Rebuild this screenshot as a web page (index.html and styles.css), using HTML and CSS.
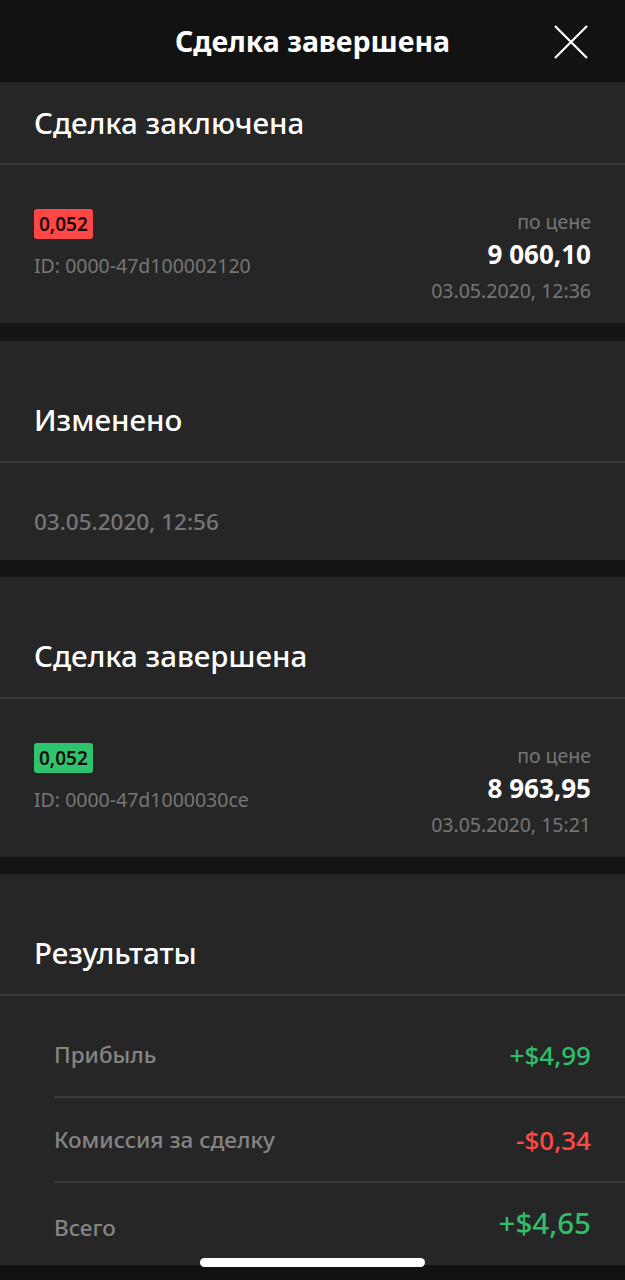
FILE: index.html
```html
<!DOCTYPE html>
<html lang="ru">
<head>
<meta charset="UTF-8">
<meta name="viewport" content="width=device-width, initial-scale=1.0">
<title>Сделка завершена</title>
<link rel="stylesheet" href="styles.css">
</head>
<body>

<div class="topbar">
  <div class="topbar-title">Сделка завершена</div>
  <button class="close-btn" aria-label="Закрыть">
    <svg width="34" height="34" viewBox="0 0 34 34">
      <path d="M1 1 L33 33 M33 1 L1 33" stroke="#fff" stroke-width="2.2" fill="none"/>
    </svg>
  </button>
</div>

<div class="section first-section">
  <div class="section-head first">Сделка заключена</div>
  <div class="deal">
    <div class="deal-left">
      <span class="badge red">0,052</span>
      <div class="muted">ID: 0000-47d100002120</div>
    </div>
    <div class="deal-right">
      <div class="muted">по цене</div>
      <div class="price">9 060,10</div>
      <div class="muted">03.05.2020, 12:36</div>
    </div>
  </div>
</div>

<div class="section">
  <div class="section-head">Изменено</div>
  <div class="changed">03.05.2020, 12:56</div>
</div>

<div class="section">
  <div class="section-head">Сделка завершена</div>
  <div class="deal">
    <div class="deal-left">
      <span class="badge green">0,052</span>
      <div class="muted">ID: 0000-47d1000030ce</div>
    </div>
    <div class="deal-right">
      <div class="muted">по цене</div>
      <div class="price">8 963,95</div>
      <div class="muted">03.05.2020, 15:21</div>
    </div>
  </div>
</div>

<div class="section results">
  <div class="section-head">Результаты</div>
  <div class="result-row first-row">
    <span class="label">Прибыль</span>
    <span class="value plus">+$4,99</span>
  </div>
  <div class="result-row">
    <span class="label">Комиссия за сделку</span>
    <span class="value minus">-$0,34</span>
  </div>
  <div class="result-row last-row">
    <span class="label">Всего</span>
    <span class="value plus total">+$4,65</span>
  </div>
</div>

<div class="bottom">
  <div class="home-bar"></div>
</div>

</body>
</html>
```

FILE: styles.css
```css
body {
  margin: 0;
  background: #141414;
  font-family: "Noto Sans", "Open Sans", sans-serif;
  color: #fff;
  width: 625px;
  height: 1280px;
  overflow: hidden;
}
.topbar {
  height: 82px;
  background: #121212;
  display: flex;
  align-items: center;
  justify-content: center;
  position: relative;
}
.topbar-title {
  font-size: 28.5px;
  font-weight: 700;
}
.close-btn {
  position: absolute;
  right: 37px;
  top: 25px;
  padding: 0;
  border: 0;
  background: none;
  line-height: 0;
}
.section {
  background: #262626;
  margin-bottom: 17px;
}
.section.first-section {
  margin-bottom: 18px;
}
.section-head {
  height: 122px;
  box-sizing: border-box;
  padding: 0 34px 22px;
  display: flex;
  align-items: flex-end;
  font-size: 29.5px;
  font-weight: 500;
  line-height: 38px;
  border-bottom: 2px solid #3a3a3a;
}
.section-head.first {
  height: 83px;
  padding-bottom: 21px;
}
.deal {
  height: 158px;
  box-sizing: border-box;
  padding: 44px 34px 0;
  display: flex;
  justify-content: space-between;
  align-items: flex-start;
}
.deal-left {
  display: flex;
  flex-direction: column;
  align-items: flex-start;
  gap: 14px;
}
.deal-right {
  display: flex;
  flex-direction: column;
  align-items: flex-end;
}
.muted {
  color: #767676;
  font-size: 19.5px;
  line-height: 26px;
}
.badge {
  font-size: 19px;
  font-weight: 600;
  color: #1a0a0a;
  padding: 0 5px;
  border-radius: 3px;
  line-height: 30px;
}
.badge.red {
  background: #ff4747;
}
.badge.green {
  background: #2ec46d;
}
.price {
  font-size: 26px;
  font-weight: 700;
  line-height: 38px;
  margin-bottom: 5px;
}
.changed {
  height: 97px;
  box-sizing: border-box;
  padding: 44px 34px 0;
  color: #767676;
  font-size: 22.5px;
  font-weight: 500;
  line-height: 30px;
}
.results {
  margin-bottom: 0;
}
.result-row {
  margin-left: 54px;
  padding: 0 34px 0 0;
  height: 85px;
  box-sizing: border-box;
  display: flex;
  justify-content: space-between;
  align-items: center;
  border-bottom: 2px solid #3a3a3a;
}
.result-row.first-row {
  height: 102px;
  padding-top: 17px;
}
.result-row.last-row {
  border-bottom: 0;
  height: 82px;
  padding-bottom: 0;
  padding-top: 6px;
}
.label {
  color: #858585;
  font-size: 22.5px;
  font-weight: 500;
}
.value {
  font-size: 26px;
  font-weight: 500;
}
.value.total {
  font-size: 29.5px;
  margin-bottom: 10px;
}
.plus {
  color: #2fbf6a;
}
.minus {
  color: #ff4a45;
}
.bottom {
  height: 20px;
  background: #111;
  position: relative;
}
.home-bar {
  position: absolute;
  left: 200px;
  top: -7px;
  width: 225px;
  height: 9px;
  border-radius: 5px;
  background: #fff;
}
```
